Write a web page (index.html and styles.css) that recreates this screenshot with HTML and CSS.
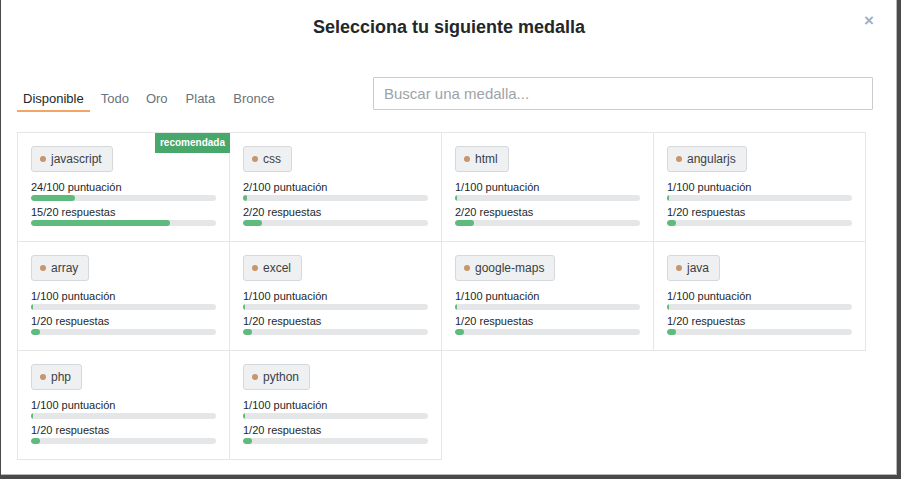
FILE: index.html
```html
<!DOCTYPE html>
<html lang="es">
<head>
<meta charset="utf-8">
<title>Selecciona tu siguiente medalla</title>
<link rel="stylesheet" href="styles.css">
</head>
<body>
<div class="modal">
  <button class="close" aria-label="Cerrar">×</button>
  <h1 class="title">Selecciona tu siguiente medalla</h1>
  <div class="toolbar">
    <nav class="tabs">
      <a class="tab active">Disponible</a>
      <a class="tab">Todo</a>
      <a class="tab">Oro</a>
      <a class="tab">Plata</a>
      <a class="tab">Bronce</a>
    </nav>
    <input class="search" type="text" placeholder="Buscar una medalla...">
  </div>
  <div class="grid">
    <div class="cell">
      <span class="badge">recomendada</span>
      <span class="tag"><span class="dot"></span>javascript</span>
      <div class="label">24/100 puntuación</div>
      <div class="bar"><div class="fill" style="width:24%"></div></div>
      <div class="label second">15/20 respuestas</div>
      <div class="bar"><div class="fill" style="width:75%"></div></div>
    </div>
    <div class="cell">
      <span class="tag"><span class="dot"></span>css</span>
      <div class="label">2/100 puntuación</div>
      <div class="bar"><div class="fill" style="width:2%"></div></div>
      <div class="label second">2/20 respuestas</div>
      <div class="bar"><div class="fill" style="width:10%"></div></div>
    </div>
    <div class="cell">
      <span class="tag"><span class="dot"></span>html</span>
      <div class="label">1/100 puntuación</div>
      <div class="bar"><div class="fill" style="width:1%"></div></div>
      <div class="label second">2/20 respuestas</div>
      <div class="bar"><div class="fill" style="width:10%"></div></div>
    </div>
    <div class="cell">
      <span class="tag"><span class="dot"></span>angularjs</span>
      <div class="label">1/100 puntuación</div>
      <div class="bar"><div class="fill" style="width:1%"></div></div>
      <div class="label second">1/20 respuestas</div>
      <div class="bar"><div class="fill" style="width:5%"></div></div>
    </div>
    <div class="cell">
      <span class="tag"><span class="dot"></span>array</span>
      <div class="label">1/100 puntuación</div>
      <div class="bar"><div class="fill" style="width:1%"></div></div>
      <div class="label second">1/20 respuestas</div>
      <div class="bar"><div class="fill" style="width:5%"></div></div>
    </div>
    <div class="cell">
      <span class="tag"><span class="dot"></span>excel</span>
      <div class="label">1/100 puntuación</div>
      <div class="bar"><div class="fill" style="width:1%"></div></div>
      <div class="label second">1/20 respuestas</div>
      <div class="bar"><div class="fill" style="width:5%"></div></div>
    </div>
    <div class="cell">
      <span class="tag"><span class="dot"></span>google-maps</span>
      <div class="label">1/100 puntuación</div>
      <div class="bar"><div class="fill" style="width:1%"></div></div>
      <div class="label second">1/20 respuestas</div>
      <div class="bar"><div class="fill" style="width:5%"></div></div>
    </div>
    <div class="cell">
      <span class="tag"><span class="dot"></span>java</span>
      <div class="label">1/100 puntuación</div>
      <div class="bar"><div class="fill" style="width:1%"></div></div>
      <div class="label second">1/20 respuestas</div>
      <div class="bar"><div class="fill" style="width:5%"></div></div>
    </div>
    <div class="cell">
      <span class="tag"><span class="dot"></span>php</span>
      <div class="label">1/100 puntuación</div>
      <div class="bar"><div class="fill" style="width:1%"></div></div>
      <div class="label second">1/20 respuestas</div>
      <div class="bar"><div class="fill" style="width:5%"></div></div>
    </div>
    <div class="cell">
      <span class="tag"><span class="dot"></span>python</span>
      <div class="label">1/100 puntuación</div>
      <div class="bar"><div class="fill" style="width:1%"></div></div>
      <div class="label second">1/20 respuestas</div>
      <div class="bar"><div class="fill" style="width:5%"></div></div>
    </div>
  </div>
</div>
</body>
</html>
```

FILE: styles.css
```css
* { box-sizing: border-box; }

html, body {
  margin: 0;
  padding: 0;
  height: 100%;
  overflow: hidden;
}

body {
  background: #4a4a4a;
  font-family: "Liberation Sans", Arial, sans-serif;
  color: #242729;
}

.modal {
  position: relative;
  margin-left: 1px;
  width: 896px;
  height: 475px;
  background: #fff;
  border-right: 1px solid #b8b8b8;
  border-bottom: 1px solid #b8b8b8;
  padding: 16px 23px 0 16px;
}

.close {
  position: absolute;
  top: 11px;
  right: 22px;
  border: 0;
  background: none;
  padding: 0;
  font-family: "Liberation Sans", Arial, sans-serif;
  font-size: 17px;
  font-weight: bold;
  line-height: 20px;
  color: #a7adb9;
  cursor: pointer;
}

.title {
  margin: 0;
  text-align: center;
  font-size: 18px;
  line-height: 22px;
  font-weight: bold;
  color: #242729;
  padding-left: 8px;
}

.toolbar {
  margin-top: 39px;
  display: flex;
  justify-content: space-between;
  align-items: flex-end;
}

.tabs {
  display: flex;
  gap: 5px;
}

.tab {
  font-size: 13px;
  line-height: 16px;
  padding: 1px 6px 3px;
  border-bottom: 2px solid transparent;
  color: #6a737c;
  cursor: pointer;
}

.tab:nth-child(4) { margin-left: 1px; }
.tab:nth-child(5) { margin-left: 1px; }

.tab.active {
  color: #242729;
  border-bottom-color: #f3a467;
}

.search {
  width: 500px;
  height: 33px;
  margin-bottom: 2px;
  border: 1px solid #c8ccd0;
  border-radius: 1px;
  padding: 0 10px;
  font-family: "Liberation Sans", Arial, sans-serif;
  font-size: 15px;
  color: #242729;
  outline: none;
}

.search::placeholder {
  color: #9da3a9;
}

.grid {
  margin-top: 20px;
  display: grid;
  grid-template-columns: repeat(4, 212px);
  width: 849px;
  border-top: 1px solid #e4e6e8;
  border-left: 1px solid #e4e6e8;
}

.cell {
  position: relative;
  border-right: 1px solid #e4e6e8;
  border-bottom: 1px solid #e4e6e8;
  padding: 13px 13px 13px 13px;
  height: 109px;
}

.badge {
  position: absolute;
  top: 0;
  right: -1px;
  height: 20px;
  line-height: 20px;
  padding: 0 5px;
  background: #48a76a;
  color: #fff;
  font-size: 10px;
  font-weight: bold;
}

.tag {
  display: inline-flex;
  align-items: center;
  height: 26px;
  padding: 0 10px 0 8px;
  background: #eff0f1;
  border: 1px solid #d6d9dc;
  border-radius: 3px;
  font-size: 12px;
  color: #3b4045;
  margin-bottom: 9px;
}

.dot {
  width: 6px;
  height: 6px;
  border-radius: 50%;
  background: #c9956a;
  margin-right: 5px;
}

.label {
  font-size: 11px;
  line-height: 13px;
  color: #242729;
}

.label.second {
  margin-top: 5px;
}

.bar {
  margin-top: 1px;
  height: 6px;
  border-radius: 3px;
  background: #e4e6e8;
  overflow: hidden;
}

.fill {
  height: 100%;
  background: #5eba7d;
  border-radius: 3px;
}
```
